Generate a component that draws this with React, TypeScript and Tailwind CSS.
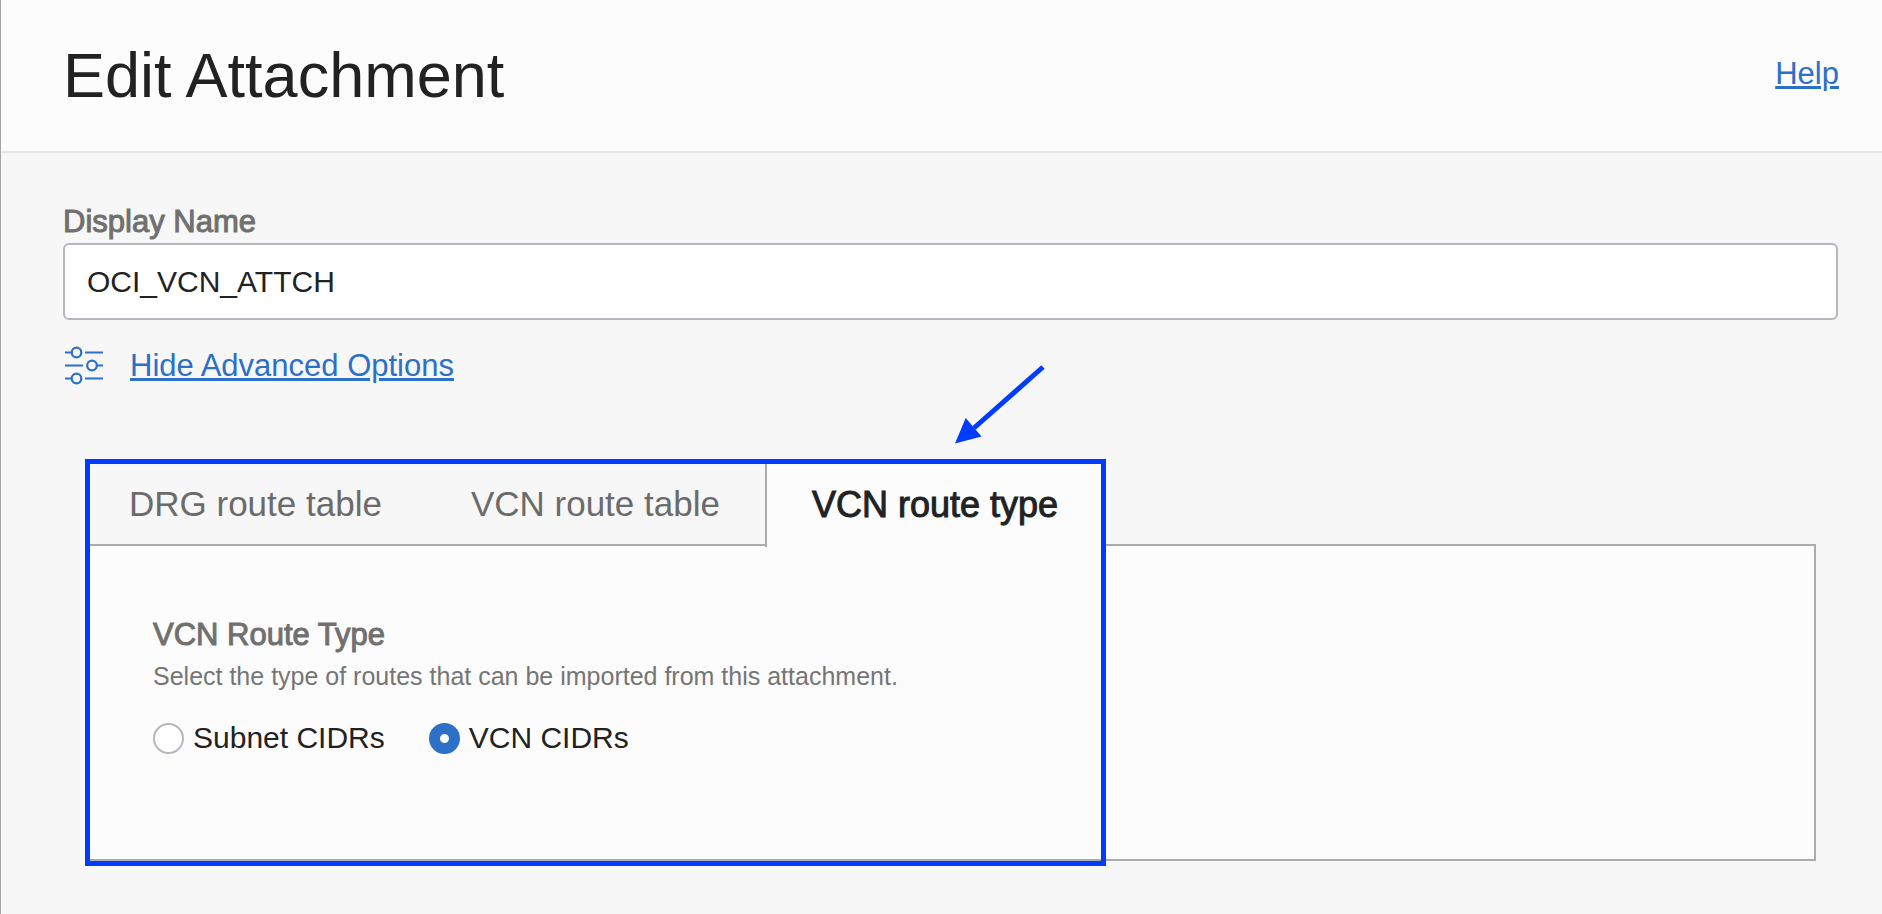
import React, { useState } from 'react';

const tabs = ['DRG route table', 'VCN route table', 'VCN route type'];
const routeTypes = ['Subnet CIDRs', 'VCN CIDRs'];

const SlidersIcon: React.FC = () => (
  <svg width="40" height="40" viewBox="0 0 40 40" fill="none" stroke="#2c70c8" strokeWidth="2.2" aria-hidden="true">
    <path d="M2 6.5h6M22 6.5h18M2 19.5h18M34 19.5h6M2 32.5h6M22 32.5h18" />
    <circle cx="13.5" cy="6.5" r="4.8" />
    <circle cx="29" cy="19.5" r="4.8" />
    <circle cx="13.5" cy="32.5" r="4.8" />
  </svg>
);

const App: React.FC = () => {
  const [displayName, setDisplayName] = useState('OCI_VCN_ATTCH');
  const [activeTab, setActiveTab] = useState('VCN route type');
  const [routeType, setRouteType] = useState('VCN CIDRs');

  return (
    <div className="min-h-screen border-l border-[#a6a6a6] bg-[#f7f7f7] font-['Liberation_Sans',Arial,sans-serif] text-[30px] leading-9 text-[#222]">
      {/* Header */}
      <header className="flex items-center justify-between border-b-2 border-[#e5e5e5] bg-[#fcfcfc] pr-[43px] pl-[62px]">
        <h1 className="pt-[39px] pb-10 text-[63px] leading-[72px]">Edit Attachment</h1>
        <a href="#help" className="mb-1 text-[31px] text-[#2c70c8] underline decoration-[3px] underline-offset-2">Help</a>
      </header>

      <main className="pt-[51px] pr-11 pl-[62px]">
        {/* Display name */}
        <label htmlFor="display-name" className="mb-[3px] block text-[31px] text-[#70706e] [-webkit-text-stroke:1px]">
          Display Name
        </label>
        <input
          id="display-name"
          type="text"
          value={displayName}
          onChange={(e) => setDisplayName(e.target.value)}
          className="block h-[77px] w-full rounded-md border-2 border-[#b4b8be] bg-white px-[22px] outline-none"
        />

        <div className="mt-[26px] flex items-center gap-[27px]">
          <SlidersIcon />
          <a href="#advanced" className="text-[31px] text-[#2c70c8] underline decoration-[3px] underline-offset-2">
            Hide Advanced Options
          </a>
        </div>

        {/* Advanced options */}
        <section className="relative mt-[73px] mr-[22px] ml-[22px]">
          <div role="tablist" className="flex">
            {tabs.map((tab) => (
              <button
                key={tab}
                type="button"
                role="tab"
                aria-selected={activeTab === tab}
                onClick={() => setActiveTab(tab)}
                className={
                  activeTab === tab
                    ? 'relative -mb-[3px] h-[88px] border-l-2 border-[#ababab] bg-[#fcfcfc] px-[45px] pt-1 text-[36px] [-webkit-text-stroke:1px]'
                    : 'h-[85px] pt-1 pr-[45px] pl-11 text-[35px] text-[#6b6b6b]'
                }
              >
                {tab}
              </button>
            ))}
          </div>

          <div role="tabpanel" className="border-2 border-[#ababab] bg-[#fcfcfc] px-[66px] pt-[71px] pb-[103px]">
            <fieldset>
              <legend className="text-[31px] text-[#70706e] [-webkit-text-stroke:1px]">VCN Route Type</legend>
              <p className="mt-[7px] text-[25px] leading-8 text-[#757575]">
                Select the type of routes that can be imported from this attachment.
              </p>
              <div className="mt-7 flex gap-11">
                {routeTypes.map((type) => (
                  <label key={type} className="flex items-center gap-[9px]">
                    <input
                      type="radio"
                      name="route-type"
                      value={type}
                      checked={routeType === type}
                      onChange={() => setRouteType(type)}
                      className="size-[31px] appearance-none rounded-full border-2 border-[#b4b8be] bg-white checked:border-[11px] checked:border-[#2c70c8]"
                    />
                    {type}
                  </label>
                ))}
              </div>
            </fieldset>
          </div>

          {/* Highlight and pointer */}
          <div className="pointer-events-none absolute top-0 -bottom-[5px] left-0 w-[1021px] border-5 border-[#003cff]" />
          <svg
            className="pointer-events-none absolute -top-[96px] left-[868px]"
            width="94"
            height="84"
            viewBox="0 0 94 84"
            aria-hidden="true"
          >
            <path d="M90 4L21 65" stroke="#003cff" strokeWidth="5" />
            <path d="M2 80.5L12.7 55L28.5 73.5Z" fill="#003cff" />
          </svg>
        </section>
      </main>
    </div>
  );
};

export default App;
